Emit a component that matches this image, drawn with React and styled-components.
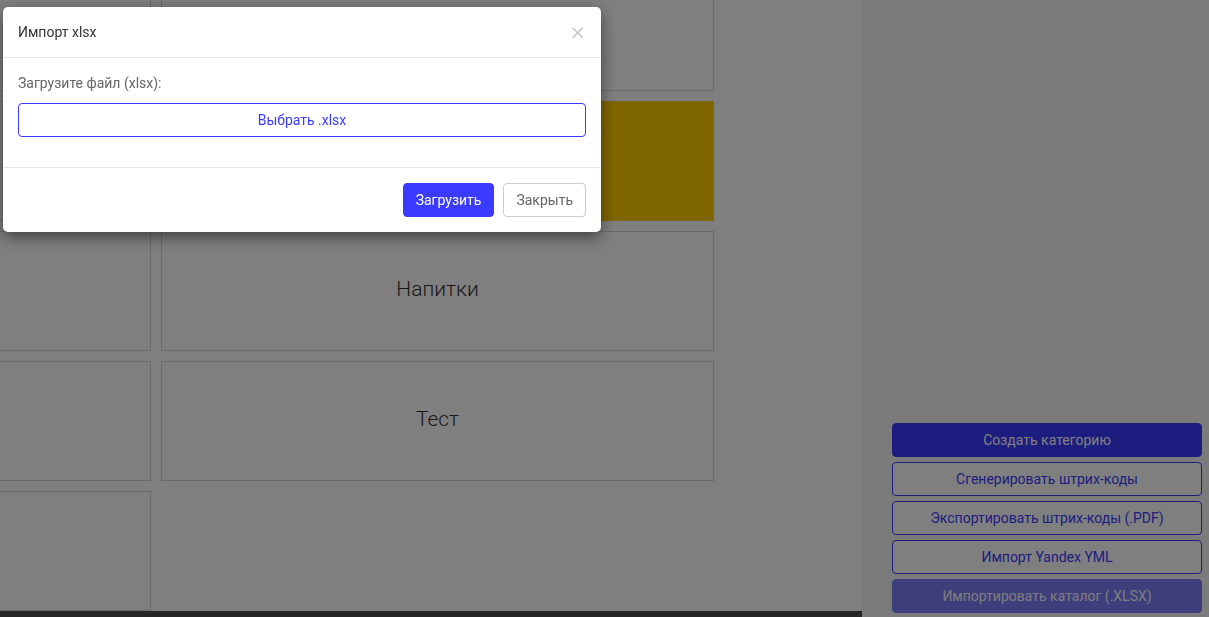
import React from 'react';
import styled, { createGlobalStyle } from 'styled-components';

const primary = '#3b3bff';

const GlobalStyle = createGlobalStyle`
  html, body {
    margin: 0;
    padding: 0;
    height: 100%;
    overflow: hidden;
  }
  body {
    font-family: Roboto, 'Liberation Sans', sans-serif;
    color: #333;
    background: #fff;
  }
  * { box-sizing: border-box; }
`;

const Layout = styled.div`
  display: flex;
  height: 100vh;
`;

const Main = styled.main`
  width: 862px;
  display: flex;
  flex-direction: column;
`;

const TileArea = styled.div`
  flex: 1;
  min-height: 0;
  overflow: hidden;
  display: grid;
  grid-template-columns: repeat(2, 553px);
  grid-auto-rows: 120px;
  gap: 10px;
  justify-content: end;
  align-content: end;
  padding-right: 148px;
`;

const Tile = styled.div`
  border: 1px solid ${p => (p.$accent ? p.$accent : '#d6d6d6')};
  background: ${p => p.$accent || '#fff'};
  display: flex;
  align-items: center;
  justify-content: center;
  padding-bottom: 5px;
  font-size: 21px;
  font-weight: 300;
  color: #333;
`;

const BottomBar = styled.div`
  height: 6px;
  background: #4a4a4a;
`;

const Sidebar = styled.aside`
  flex: 1;
  background: #f6f6f6;
  display: flex;
  flex-direction: column;
  justify-content: flex-end;
  gap: 5px;
  padding: 0 7px 4px 30px;
`;

const SideButton = styled.button`
  height: 34px;
  border-radius: 4px;
  border: 1px solid ${primary};
  background: ${p => (p.$filled ? primary : '#fff')};
  color: ${p => (p.$filled ? '#fff' : primary)};
  font-family: inherit;
  font-size: 14px;
  opacity: ${p => (p.disabled ? 0.65 : 1)};
  padding: 0 12px;
`;

const Backdrop = styled.div`
  position: fixed;
  inset: 0;
  background: rgba(0, 0, 0, 0.5);
`;

const Dialog = styled.div`
  position: fixed;
  top: 7px;
  left: 3px;
  width: 598px;
  background: #fff;
  border-radius: 5px;
  box-shadow: 0 5px 15px rgba(0, 0, 0, 0.5);
  overflow: hidden;
`;

const DialogHeader = styled.div`
  height: 51px;
  padding: 0 15px;
  display: flex;
  align-items: center;
  justify-content: space-between;
  border-bottom: 1px solid #e5e5e5;
`;

const DialogTitle = styled.h4`
  margin: 0;
  font-size: 14px;
  font-weight: 400;
  color: #333;
`;

const CloseButton = styled.button`
  border: 0;
  background: none;
  padding: 0;
  margin-right: 0;
  font-size: 20px;
  line-height: 1;
  color: #c8c8c8;
  font-family: 'DejaVu Sans', sans-serif;
`;

const DialogBody = styled.div`
  padding: 15px 15px 30px;
  border-bottom: 1px solid #e5e5e5;
`;

const FieldLabel = styled.div`
  font-size: 14px;
  color: #666;
  line-height: 20px;
  margin-bottom: 10px;
`;

const PickFile = styled.button`
  display: block;
  width: 100%;
  height: 34px;
  border: 1px solid ${primary};
  border-radius: 4px;
  background: #fff;
  color: ${primary};
  font-family: inherit;
  font-size: 14px;
`;

const DialogFooter = styled.div`
  padding: 15px 15px 15px;
  display: flex;
  justify-content: flex-end;
  gap: 9px;
`;

const FooterButton = styled.button`
  height: 34px;
  padding: 0 12px;
  border-radius: 4px;
  font-family: inherit;
  font-size: 14px;
  border: 1px solid ${p => (p.$primary ? primary : '#ccc')};
  background: ${p => (p.$primary ? primary : '#fff')};
  color: ${p => (p.$primary ? '#fff' : '#666')};
`;

const tiles = [
  { name: '' }, { name: '' },
  { name: '' }, { name: '', accent: '#ffcc00' },
  { name: '' }, { name: 'Напитки' },
  { name: '' }, { name: 'Тест' },
  { name: '' },
];

const actions = [
  { label: 'Создать категорию', filled: true },
  { label: 'Сгенерировать штрих-коды' },
  { label: 'Экспортировать штрих-коды (.PDF)' },
  { label: 'Импорт Yandex YML' },
  { label: 'Импортировать каталог (.XLSX)', filled: true, disabled: true },
];

export default function App() {
  return (
    <>
      <GlobalStyle />
      <Layout>
        <Main>
          <TileArea>
            {tiles.map((t, i) => (
              <Tile key={i} $accent={t.accent}>{t.name}</Tile>
            ))}
          </TileArea>
          <BottomBar />
        </Main>
        <Sidebar>
          {actions.map(a => (
            <SideButton key={a.label} $filled={a.filled} disabled={a.disabled}>
              {a.label}
            </SideButton>
          ))}
        </Sidebar>
      </Layout>
      <Backdrop />
      <Dialog>
        <DialogHeader>
          <DialogTitle>Импорт xlsx</DialogTitle>
          <CloseButton>×</CloseButton>
        </DialogHeader>
        <DialogBody>
          <FieldLabel>Загрузите файл (xlsx):</FieldLabel>
          <PickFile>Выбрать .xlsx</PickFile>
        </DialogBody>
        <DialogFooter>
          <FooterButton $primary>Загрузить</FooterButton>
          <FooterButton>Закрыть</FooterButton>
        </DialogFooter>
      </Dialog>
    </>
  );
}
